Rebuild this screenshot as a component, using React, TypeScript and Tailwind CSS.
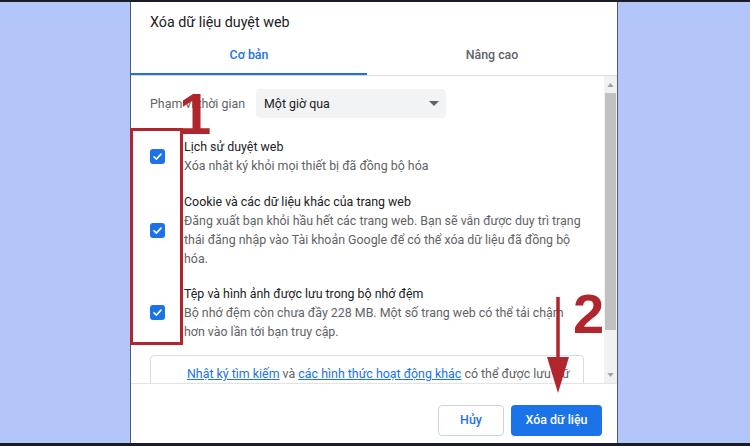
const items = [
  {
    title: "Lịch sử duyệt web",
    lines: ["Xóa nhật ký khỏi mọi thiết bị đã đồng bộ hóa"],
    mt: "mt-[19px]",
  },
  {
    title: "Cookie và các dữ liệu khác của trang web",
    lines: [
      "Đăng xuất bạn khỏi hầu hết các trang web. Bạn sẽ vẫn được duy trì trạng",
      "thái đăng nhập vào Tài khoản Google để có thể xóa dữ liệu đã đồng bộ",
      "hóa.",
    ],
    mt: "mt-[17px]",
  },
  {
    title: "Tệp và hình ảnh được lưu trong bộ nhớ đệm",
    lines: [
      "Bộ nhớ đệm còn chưa đầy 228 MB. Một số trang web có thể tải chậm",
      "hơn vào lần tới bạn truy cập.",
    ],
    mt: "mt-[16px]",
  },
];

const Checkbox = () => (
  <div className="flex h-[15px] w-[15px] shrink-0 items-center justify-center rounded-[3px] bg-[#1a73e8]">
    <svg viewBox="0 0 12 12" className="h-[11px] w-[11px]">
      <polyline
        points="2.2,6.3 4.9,8.8 9.8,3.4"
        fill="none"
        stroke="white"
        strokeWidth="1.8"
        strokeLinecap="round"
        strokeLinejoin="round"
      />
    </svg>
  </div>
);

const Triangle = ({ up }: { up?: boolean }) => (
  <svg viewBox="0 0 8 5" className="h-[4px] w-[7px]">
    <polygon points={up ? "0,5 8,5 4,0" : "0,0 8,0 4,5"} fill="#a3a3a3" />
  </svg>
);

const ClearDataDialog = () => {
  return (
    <div className="flex h-full w-[488px] flex-col border-x border-[#565a66] bg-white">
      <div className="h-[34px] pl-[19px] pt-[10px] text-[14.3px] leading-[20px] text-[#202124]">
        Xóa dữ liệu duyệt web
      </div>

      <div className="flex h-[40px] border-b border-[#dadce0] text-[12.4px] font-medium">
        <div className="flex w-[236px] items-center justify-center border-b-2 border-[#1a73e8] pt-[1px] text-[#1a73e8]">
          Cơ bản
        </div>
        <div className="flex flex-1 items-center justify-center text-[#5f6368]">
          Nâng cao
        </div>
      </div>

      <div className="flex h-[307px] overflow-hidden">
        <div className="flex-1 overflow-hidden pl-[19px] pt-[13px] text-[12.4px] leading-[19px]">
          <div className="flex items-center">
            <span className="w-[106px] text-[#5f6368]">Phạm vi thời gian</span>
            <div className="flex h-[29px] w-[190px] items-center justify-between rounded-[4px] bg-[#f1f3f4] pl-[8px] pr-[7px] text-[#202124]">
              <span>Một giờ qua</span>
              <svg viewBox="0 0 10 5" className="h-[5px] w-[10px]">
                <polygon points="0,0 10,0 5,5" fill="#5f6368" />
              </svg>
            </div>
          </div>

          {items.map((item, i) => (
            <div key={i} className={`flex items-center gap-[19px] ${item.mt}`}>
              <Checkbox />
              <div className="whitespace-nowrap">
                <div className="text-[#202124]">{item.title}</div>
                {item.lines.map((line, j) => (
                  <div key={j} className="text-[#5f6368]">
                    {line}
                  </div>
                ))}
              </div>
            </div>
          ))}

          <div className="mr-[20px] mt-[14px] h-[60px] overflow-hidden whitespace-nowrap rounded-[4px] border border-[#dadce0] pl-[36px] pt-[8px] text-[#5f6368]">
            <span className="text-[#1a73e8] underline">Nhật ký tìm kiếm</span> và{" "}
            <span className="text-[#1a73e8] underline">
              các hình thức hoạt động khác
            </span>{" "}
            có thể được lưu trữ
          </div>
        </div>

        <div className="flex w-[13px] flex-col bg-[#f1f1f1]">
          <div className="flex h-[17px] items-center justify-center">
            <Triangle up />
          </div>
          <div className="mx-[1px] h-[237px] bg-[#c1c1c1]" />
          <div className="flex-1" />
          <div className="flex h-[17px] items-center justify-center">
            <Triangle />
          </div>
        </div>
      </div>

      <div className="flex flex-1 justify-end gap-[7px] border-t border-[#e3e3e3] pr-[15px] pt-[21px] text-[12.4px] font-medium">
        <button className="h-[31px] w-[66px] rounded-[4px] border border-[#c9d3e3] text-[#1a73e8]">
          Hủy
        </button>
        <button className="h-[31px] w-[91px] rounded-[4px] bg-[#1a73e8] text-white">
          Xóa dữ liệu
        </button>
      </div>
    </div>
  );
};

export default function App() {
  return (
    <div className="relative flex h-[446px] w-[750px] flex-col overflow-hidden bg-[#b3c6f9] font-['Roboto','Liberation_Sans',sans-serif]">
      <div className="h-[2px] bg-[#1c1c28]" />
      <div className="flex flex-1 pl-[130px]">
        <ClearDataDialog />
      </div>
      <div className="h-[3px] bg-[#1c1c28]" />

      {/* red annotations over the screenshot */}
      <div className="absolute left-[130px] top-[128px] h-[217px] w-[53px] border-[3px] border-[#b1252c]" />
      <div className="absolute left-[179px] top-[85px] font-['Liberation_Sans',sans-serif] text-[58px] font-bold leading-none text-[#b1252c]">
        1
      </div>
      <div className="absolute left-[573px] top-[286px] font-['Liberation_Sans',sans-serif] text-[56px] font-bold leading-none text-[#b1252c]">
        2
      </div>
      <svg
        viewBox="0 0 28 100"
        className="absolute left-[544px] top-[295px] h-[100px] w-[28px]"
      >
        <line x1="14" y1="2" x2="14" y2="70" stroke="#b1252c" strokeWidth="3.5" />
        <polygon points="3,62 25,62 14,98" fill="#b1252c" />
      </svg>
    </div>
  );
}
